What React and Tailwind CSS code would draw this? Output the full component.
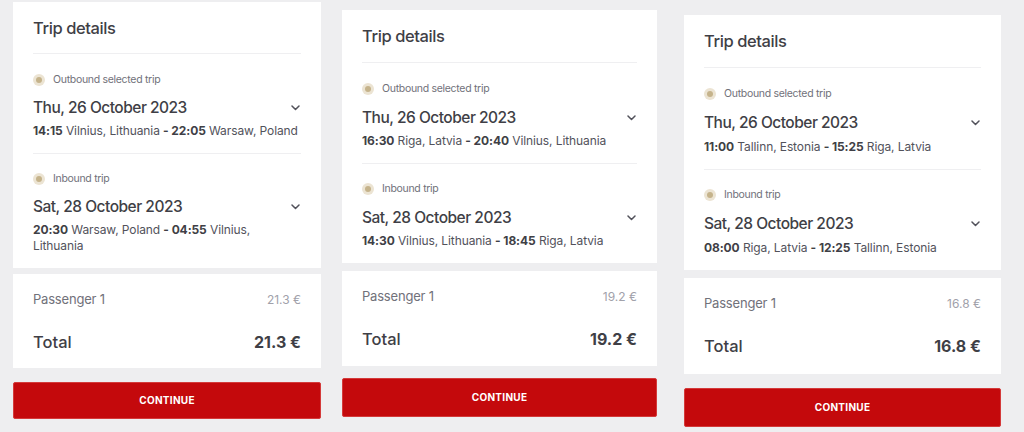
import React from 'react'

// each screenshot column is a touch different in scale, so the spacing is kept per column
const trips = [
  {
    width: 'w-[308px]',
    top: 'pt-[2px]',
    titlePb: 'pb-[13px]',
    dateMt: 'mt-[10px]',
    routeMt: 'mt-[4px]',
    legPb: 'pb-[14px]',
    priceMt: 'mt-[6px]',
    pricePb: 'pb-[14px]',
    btn: 'mt-[14px] h-[37px]',
    outDate: 'Thu, 26 October 2023',
    out: ['14:15', 'Vilnius, Lithuania', '22:05', 'Warsaw, Poland'],
    inDate: 'Sat, 28 October 2023',
    back: ['20:30', 'Warsaw, Poland', '04:55', 'Vilnius, Lithuania'],
    price: '21.3 €',
  },
  {
    width: 'w-[315px]',
    top: 'pt-[10px]',
    titlePb: 'pb-[14px]',
    dateMt: 'mt-[11px]',
    routeMt: 'mt-[4px]',
    legPb: 'pb-[14px]',
    priceMt: 'mt-[8px]',
    pricePb: 'pb-[15px]',
    btn: 'mt-[12px] h-[39px]',
    outDate: 'Thu, 26 October 2023',
    out: ['16:30', 'Riga, Latvia', '20:40', 'Vilnius, Lithuania'],
    inDate: 'Sat, 28 October 2023',
    back: ['14:30', 'Vilnius, Lithuania', '18:45', 'Riga, Latvia'],
    price: '19.2 €',
  },
  {
    width: 'w-[317px]',
    top: 'pt-[15px]',
    titlePb: 'pb-[14px]',
    dateMt: 'mt-[11px]',
    routeMt: 'mt-[5px]',
    legPb: 'pb-[14px]',
    priceMt: 'mt-[8px]',
    pricePb: 'pb-[16px]',
    btn: 'mt-[14px] h-[39px]',
    outDate: 'Thu, 26 October 2023',
    out: ['11:00', 'Tallinn, Estonia', '15:25', 'Riga, Latvia'],
    inDate: 'Sat, 28 October 2023',
    back: ['08:00', 'Riga, Latvia', '12:25', 'Tallinn, Estonia'],
    price: '16.8 €',
  },
]

function Radio() {
  return (
    <span className="w-[12px] h-[12px] rounded-full bg-[#ece4d3] flex items-center justify-center shrink-0">
      <span className="w-[6px] h-[6px] rounded-full bg-[#c5b38b]" />
    </span>
  )
}

function Chevron() {
  return (
    <svg width="9" height="6" viewBox="0 0 9 6" className="shrink-0">
      <path d="M1 1l3.5 3.5L8 1" fill="none" stroke="#52525b" strokeWidth="1.5" strokeLinecap="round" strokeLinejoin="round" />
    </svg>
  )
}

function Leg({ t, label, date, route, first }) {
  const words = route[3].split(' ')
  return (
    <div className={`${first ? 'pt-[19px]' : 'pt-[18px] border-t border-[#efeff1]'} ${t.legPb}`}>
      <div className="flex items-center gap-[8px] h-[14px]">
        <Radio />
        <span className="text-[10.5px] text-[#71717a] tracking-[-0.3px]">{label}</span>
      </div>
      <div className={`flex items-center justify-between ${t.dateMt} h-[22px] pr-[1px]`}>
        <span className="text-[15.5px] font-medium text-[#3f3f46] tracking-[-0.5px]">{date}</span>
        <Chevron />
      </div>
      <p className={`${t.routeMt} text-[12px] leading-[16px] text-[#52525b] tracking-[-0.1px]`}>
        <b className="font-bold text-[#3f3f46]">{route[0]}</b> {route[1]}{' '}
        <b className="font-bold text-[#3f3f46]">- {route[2]}</b>
        {words.map((w, i) => (
          <React.Fragment key={i}>
            {' '}
            <span>{w}</span>
          </React.Fragment>
        ))}
      </p>
    </div>
  )
}

function Column({ t }) {
  return (
    <div className={`${t.width} ${t.top} flex flex-col`}>
      <div className="bg-white px-[20px] pt-[14px]">
        <h2 className={`text-[16.5px] leading-[24px] font-medium text-[#3f3f46] tracking-[-0.4px] ${t.titlePb} border-b border-[#efeff1]`}>
          Trip details
        </h2>
        <Leg t={t} label="Outbound selected trip" date={t.outDate} route={t.out} first />
        <Leg t={t} label="Inbound trip" date={t.inDate} route={t.back} />
      </div>
      <div className={`bg-white ${t.priceMt} px-[20px] pt-[17px] ${t.pricePb}`}>
        <div className="flex items-center justify-between h-[18px]">
          <span className="text-[13px] text-[#71717a] tracking-[-0.2px]">Passenger 1</span>
          <span className="text-[12px] text-[#a1a1aa]">{t.price}</span>
        </div>
        <div className="flex items-center justify-between h-[24px] mt-[21px]">
          <span className="text-[16.5px] font-medium text-[#3f3f46]">Total</span>
          <span className="text-[16px] font-bold text-[#3f3f46]">{t.price}</span>
        </div>
      </div>
      <button className={`${t.btn} bg-[#c4090c] rounded-[2px] border border-[#d43a3a] text-white text-[10px] font-bold tracking-[0.3px]`}>
        CONTINUE
      </button>
    </div>
  )
}

export default function App() {
  return (
    <div
      className="w-[1024px] h-[432px] bg-[#eeeef0] flex gap-[21px] pl-[13px] overflow-hidden"
      style={{ fontFamily: 'Inter, "Noto Sans", sans-serif' }}
    >
      <Column t={trips[0]} />
      <Column t={trips[1]} />
      <div className="pl-[6px]">
        <Column t={trips[2]} />
      </div>
    </div>
  )
}
